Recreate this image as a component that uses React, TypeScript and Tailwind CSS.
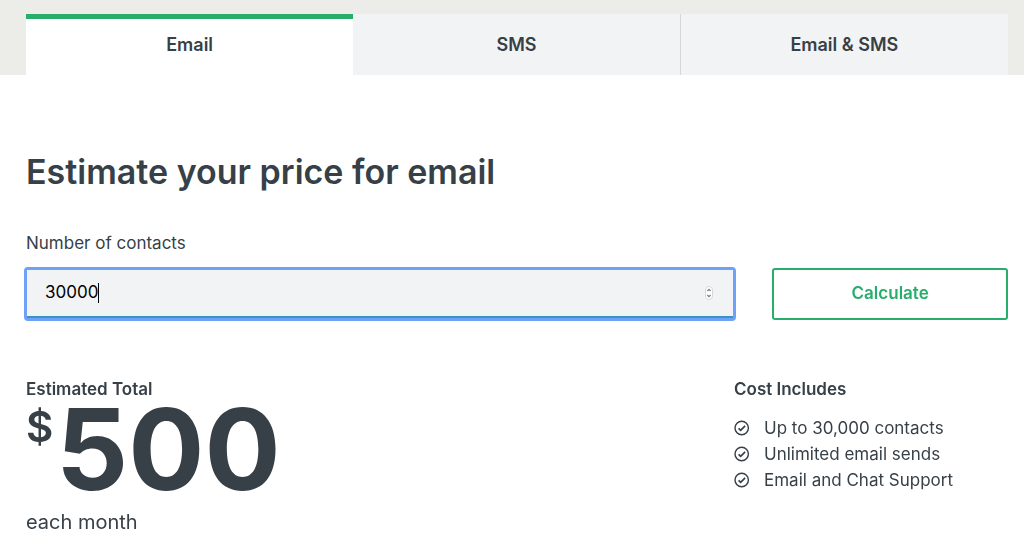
import { useState } from "react";

const tabs = ["Email", "SMS", "Email & SMS"];

const features = [
  "Up to 30,000 contacts",
  "Unlimited email sends",
  "Email and Chat Support",
];

const CheckIcon = () => (
  <svg
    className="size-4 shrink-0"
    viewBox="0 0 16 16"
    fill="none"
    stroke="currentColor"
    aria-hidden="true"
  >
    <circle cx="7.7" cy="8" r="6.7" strokeWidth="1.4" />
    <path d="M4.6 8.3l2.1 2.1 4.4-4.5" strokeWidth="1.7" />
  </svg>
);

const StepperIcon = () => (
  <svg
    className="h-3.5 w-2"
    viewBox="0 0 8 14"
    fill="none"
    aria-hidden="true"
  >
    <rect x="0.5" y="0.5" width="7" height="13" rx="3.5" fill="#fff" stroke="#d8d8d8" />
    <path d="M2.4 5L4 3.4 5.6 5M2.4 9L4 10.6 5.6 9" stroke="#777" strokeWidth="1.1" />
  </svg>
);

const App = () => {
  const [activeTab, setActiveTab] = useState("Email");
  const [contacts, setContacts] = useState("30000");

  return (
    <main className="bg-white font-[Inter,sans-serif] text-[#373f47]">
      <div className="bg-[#ecede8] pt-3.5 pr-4 pl-[26px]">
        <div role="tablist" className="grid grid-cols-3">
          {tabs.map((tab) => (
            <button
              key={tab}
              type="button"
              role="tab"
              aria-selected={tab === activeTab}
              onClick={() => setActiveTab(tab)}
              className={
                tab === activeTab
                  ? "h-[61px] border-t-[5px] border-[#27ae6b] bg-white pb-1 text-lg font-semibold"
                  : "h-[61px] border-r border-[#d5d6d8] bg-[#f2f3f5] text-lg font-semibold last:border-r-0"
              }
            >
              {tab}
            </button>
          ))}
        </div>
      </div>

      <div className="pt-[72px] pr-4 pl-[26px]">
        <h1 className="text-[34px] leading-[50px] font-semibold">
          Estimate your price for email
        </h1>

        <form className="mt-[34px]" onSubmit={(e) => e.preventDefault()}>
          <label htmlFor="contacts" className="block text-[17px] leading-6">
            Number of contacts
          </label>
          <div className="mt-3 flex items-center gap-9">
            <div className="-ml-0.5 flex h-[54px] min-w-0 flex-1 rounded-sm border-[3px] border-[#6ea2f8]">
              <label
                htmlFor="contacts"
                className="flex min-w-0 flex-1 cursor-text items-center border-b-2 border-[#3b93c4] bg-[#f2f3f5] pr-5 pl-[18px]"
              >
                <input
                  id="contacts"
                  type="text"
                  inputMode="numeric"
                  autoFocus
                  value={contacts}
                  onChange={(e) => setContacts(e.target.value)}
                  className="field-sizing-content max-w-full text-[17px] text-black caret-transparent outline-none"
                />
                <span className="h-5 w-px bg-black" />
                <span className="ml-auto">
                  <StepperIcon />
                </span>
              </label>
            </div>
            <button
              type="submit"
              className="h-[52px] w-[24%] rounded-[3px] border-2 border-[#27ae6b] text-[17px] font-semibold text-[#27ae6b]"
            >
              Calculate
            </button>
          </div>
        </form>

        <div className="mt-14 flex justify-between">
          <section>
            <h2 className="text-[17px] leading-6 font-semibold">Estimated Total</h2>
            <p className="flex items-start">
              <span className="mt-1.5 w-[30px] text-[42px] leading-10 font-semibold">$</span>
              <span className="text-[113px] leading-[96px] font-bold">500</span>
            </p>
            <p className="mt-3 text-xl leading-[26px]">each month</p>
          </section>

          <section className="w-[274px]">
            <h2 className="text-[17px] leading-6 font-semibold">Cost Includes</h2>
            <ul className="mt-3.5 text-[17px] leading-[26px]">
              {features.map((feature) => (
                <li key={feature} className="flex items-center gap-3.5">
                  <CheckIcon />
                  {feature}
                </li>
              ))}
            </ul>
          </section>
        </div>
      </div>
    </main>
  );
};

export default App;
